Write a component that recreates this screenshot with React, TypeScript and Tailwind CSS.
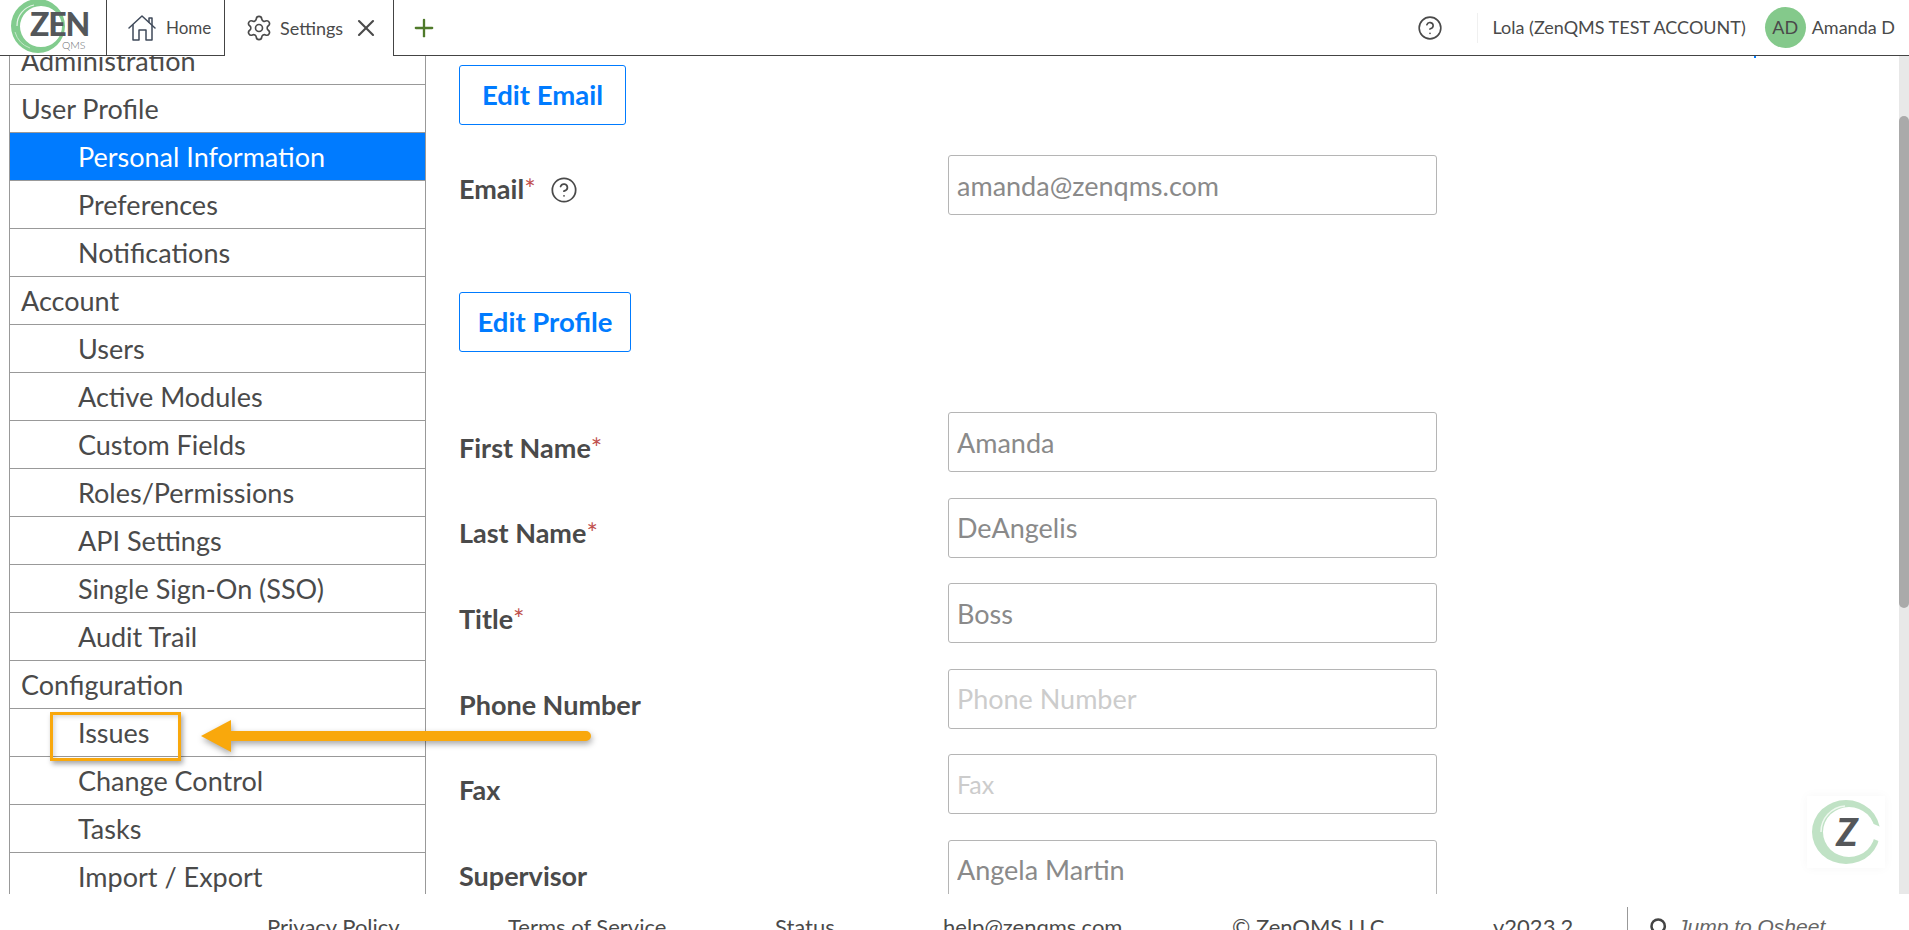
import React from 'react';
import { Settings, X, Plus, CircleHelp, Search } from 'lucide-react';

type NavRow = { label: string; sub?: boolean; active?: boolean };

const navRows: NavRow[] = [
  { label: 'Administration' },
  { label: 'User Profile' },
  { label: 'Personal Information', sub: true, active: true },
  { label: 'Preferences', sub: true },
  { label: 'Notifications', sub: true },
  { label: 'Account' },
  { label: 'Users', sub: true },
  { label: 'Active Modules', sub: true },
  { label: 'Custom Fields', sub: true },
  { label: 'Roles/Permissions', sub: true },
  { label: 'API Settings', sub: true },
  { label: 'Single Sign-On (SSO)', sub: true },
  { label: 'Audit Trail', sub: true },
  { label: 'Configuration' },
  { label: 'Issues', sub: true },
  { label: 'Change Control', sub: true },
  { label: 'Tasks', sub: true },
  { label: 'Import / Export', sub: true },
];

const fields = [
  { label: 'First Name', required: true, value: 'Amanda' },
  { label: 'Last Name', required: true, value: 'DeAngelis' },
  { label: 'Title', required: true, value: 'Boss' },
  { label: 'Phone Number', placeholder: 'Phone Number' },
  { label: 'Fax', placeholder: 'Fax', small: true },
  { label: 'Supervisor', value: 'Angela Martin' },
];

const footerLinks = [
  { label: 'Privacy Policy', cls: 'w-[241px]' },
  { label: 'Terms of Service', cls: 'w-[267px]' },
  { label: 'Status', cls: 'w-[168px]' },
  { label: 'help@zenqms.com', cls: 'w-[289px]' },
  { label: '© ZenQMS LLC', cls: 'w-[261px]' },
  { label: 'v2023.2', cls: 'w-[134px]' },
];

function ZenLogo() {
  return (
    <svg width="106" height="55" viewBox="0 0 106 55">
      <path
        fillRule="evenodd"
        d="M38 -1 A27 27 0 1 0 38 53 A27 27 0 1 0 38 -1 Z M41 6 A21 20.5 0 1 1 41 47 A21 20.5 0 1 1 41 6 Z"
        fill="#82cc8e"
      />
      <path d="M17 26 A21 21 0 0 1 34 5" fill="none" stroke="#e4f4e6" strokeWidth="1.2" />
      <path d="M15 32 A24 24 0 0 0 30 48" fill="none" stroke="#c5e8ca" strokeWidth="1" />
      <text x="30" y="36" fontFamily="Lato" fontWeight="900" fontSize="32" letterSpacing="-1.2" fill="#54575a">ZEN</text>
      <text x="62" y="49" fontFamily="Lato" fontWeight="300" fontSize="10.5" fill="#6a6d70">QMS</text>
    </svg>
  );
}

function HomeIcon() {
  return (
    <svg width="30" height="28" viewBox="0 0 30 28" fill="none" stroke="#3f4a5a" strokeWidth="1.5" strokeLinejoin="round" strokeLinecap="round">
      <path d="M2 14 L15 2 L28 14" />
      <path d="M22 8 V4 H25 V11" />
      <path d="M6 11 V26 H12 V16 H19 V26 H25 V12" />
    </svg>
  );
}

function FloatLogo() {
  return (
    <div className="absolute left-[1807px] top-[796px] w-[78px] h-[72px] bg-white shadow-[0_0_10px_rgba(0,0,0,0.04)] flex items-center justify-center">
      <svg width="74" height="68" viewBox="0 0 74 68">
        <path
          fillRule="evenodd"
          d="M37 2 A34 32 0 1 0 37 66 A34 32 0 1 0 37 2 Z M40 9 A26 25 0 1 1 40 59 A26 25 0 1 1 40 9 Z"
          fill="#c0e2c5"
        />
        <path d="M12 34 A26 26 0 0 1 36 8" fill="none" stroke="#eef8ef" strokeWidth="1.5" />
        <path d="M60 24 L74 30 L72 44 L62 40 Z" fill="#fff" />
        <text x="38" y="48" textAnchor="middle" fontFamily="Lato" fontWeight="900" fontStyle="italic" fontSize="38" fill="#55575a">Z</text>
      </svg>
    </div>
  );
}

function Annotation() {
  return (
    <>
      <div className="absolute left-[50px] top-[712px] w-[131px] h-[49px] border-[3px] border-[#f9a80c] shadow-[2px_3px_5px_rgba(0,0,0,0.35),inset_2px_2px_4px_rgba(0,0,0,0.15)]" />
      <svg className="absolute left-[195px] top-[712px]" width="410" height="52" viewBox="0 0 410 52" style={{ filter: 'drop-shadow(1px 3px 3px rgba(0,0,0,0.35))' }}>
        <path d="M6 24 L36 8 L36 19 L391 19 A5 5 0 0 1 391 29 L36 29 L36 40 Z" fill="#f9a80c" />
      </svg>
    </>
  );
}

export default function App() {
  return (
    <div className="relative w-[1909px] h-[930px] overflow-hidden bg-white font-['Lato',sans-serif] text-[#4a4a4a]">
      {/* top bar */}
      <header className="flex h-[56px] border-b border-[#444]">
        <div className="w-[107px] border-r border-[#444] shrink-0">
          <ZenLogo />
        </div>
        <div className="w-[118px] border-r border-[#444] flex items-center pl-[20px] shrink-0">
          <HomeIcon />
          <span className="ml-[9px] text-[17px]">Home</span>
        </div>
        <div className="relative w-[169px] border-r border-[#444] flex items-center pl-[20px] shrink-0 h-[56px] bg-white">
          <Settings size={28} strokeWidth={1.4} />
          <span className="ml-[7px] text-[18px]">Settings</span>
          <X size={28} strokeWidth={1.8} className="ml-[9px]" />
        </div>
        <div className="flex items-center pl-[16px]">
          <Plus size={28} strokeWidth={2} className="text-[#4f7a2a]" />
        </div>
        <div className="ml-auto flex items-center pr-[14px] h-full">
          <CircleHelp size={26} strokeWidth={1.5} />
          <div className="w-px h-[30px] bg-[#f0f0f0] ml-[34px] mr-[15px]" />
          <span className="text-[18px]">Lola (ZenQMS TEST ACCOUNT)</span>
          <div className="ml-[19px] w-[41px] h-[41px] rounded-full bg-[#84c98b] flex items-center justify-center text-[18px]">AD</div>
          <span className="ml-[6px] text-[18px]">Amanda D</span>
        </div>
      </header>

      {/* body */}
      <div className="flex h-[838px]">
        <nav className="ml-[9px] w-[417px] h-full shrink-0 overflow-hidden border-x border-[#999]">
          <div className="-mt-[19px]">
            {navRows.map((row) => (
              <div
                key={row.label}
                className={`h-[48px] flex items-center pt-[2px] border-b border-[#999] text-[27px] ${row.sub ? 'pl-[68px]' : 'pl-[11px]'} ${row.active ? 'bg-[#007bff] text-white' : ''}`}
              >
                {row.label}
              </div>
            ))}
          </div>
        </nav>

        <main className="flex-1 overflow-hidden pl-[33px] pt-[9px]">
          <button className="block w-[167px] h-[60px] border border-[#007bff] rounded-[3px] text-[#007bff] font-bold text-[27.5px]">Edit Email</button>
          <div className="flex items-center mt-[30px] h-[60px]">
            <div className="w-[489px] flex items-center pt-[9px] text-[27px] font-bold">
              Email<span className="text-[#c0504d] font-normal">*</span>
              <CircleHelp size={28} strokeWidth={1.5} className="ml-[14px]" />
            </div>
            <input readOnly value="amanda@zenqms.com" className="w-[489px] h-[60px] border border-[#b5b5b5] rounded-[3px] px-[8px] text-[27px] text-[#8a8a8a] outline-none" />
          </div>
          <button className="block mt-[77px] w-[172px] h-[60px] border border-[#007bff] rounded-[3px] text-[#007bff] font-bold text-[27.5px]">Edit Profile</button>
          <div className="mt-[60px] flex flex-col gap-[25.6px]">
            {fields.map((f) => (
              <div key={f.label} className="flex items-center h-[60px]">
                <div className="w-[489px] pt-[12px] text-[27px] font-bold">
                  {f.label}
                  {f.required && <span className="text-[#c0504d] font-normal">*</span>}
                </div>
                <input
                  readOnly
                  value={f.value ?? ''}
                  placeholder={f.placeholder}
                  className={`w-[489px] h-[60px] border border-[#b5b5b5] rounded-[3px] px-[8px] text-[#8a8a8a] placeholder:text-[#cccccc] outline-none ${f.small ? 'text-[25px]' : 'text-[27px]'}`}
                />
              </div>
            ))}
          </div>
        </main>

        <div className="w-[10px] h-full bg-[#e8e8e8] shrink-0">
          <div className="mt-[60px] h-[492px] rounded-[5px] bg-[#aaaaaa]" />
        </div>
      </div>

      {/* footer */}
      <footer className="flex h-[36px] pl-[267px] overflow-hidden text-[22px]">
        {footerLinks.map((l) => (
          <div key={l.label} className={`pt-[16px] shrink-0 whitespace-nowrap ${l.cls}`}>{l.label}</div>
        ))}
        <div className="mt-[13px] w-px h-[23px] bg-[#999] shrink-0" />
        <div className="pt-[17px] pl-[21px] flex items-start font-['Liberation_Sans',sans-serif] text-[21px] italic text-[#666] whitespace-nowrap">
          <Search size={20} strokeWidth={3} className="text-[#444] mt-[6px]" />
          <span className="ml-[8px]">Jump to Qsheet</span>
        </div>
      </footer>

      {/* overlays */}
      <div className="absolute left-[1754px] top-[56px] w-[2px] h-[2px] bg-[#007bff]" />
      <Annotation />
      <FloatLogo />
    </div>
  );
}
